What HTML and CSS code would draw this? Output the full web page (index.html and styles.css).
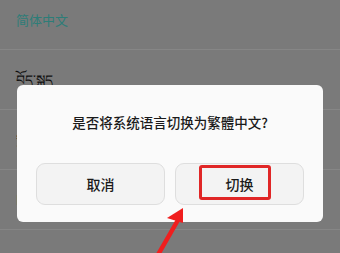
FILE: index.html
```html
<!doctype html>
<html lang="zh-CN">

<head>
    <meta charset="UTF-8">
    <title>语言设置</title>
    <link rel="stylesheet" href="styles.css">
</head>

<body>
    <div class="screen">
        <ul class="lang-list">
            <li class="lang-item current">简体中文</li>
            <li class="lang-item tibetan">བོད་སྐད</li>
            <li class="lang-item">繁體中文</li>
            <li class="lang-item">English</li>
        </ul>

        <!-- 弹窗 -->
        <div class="mask">
            <div class="dialog">
                <p class="dialog-title">是否将系统语言切换为繁體中文?</p>
                <div class="dialog-btns">
                    <div class="btn">取消</div>
                    <div class="btn">切换</div>
                </div>
            </div>
        </div>

        <!-- 标注 -->
        <div class="mark-box"></div>
        <svg class="mark-arrow" width="60" height="60" viewBox="0 0 60 60">
            <path d="M5 60 L28 20" stroke="#f01e1e" stroke-width="4.5" fill="none"/>
            <polygon points="33,8 17,18 33,23" fill="#f01e1e"/>
        </svg>
    </div>
</body>

</html>
```

FILE: styles.css
```css
* {
    margin: 0;
    padding: 0;
}
li {
    list-style: none;
}
body {
    font-family: "Noto Sans CJK SC", "DejaVu Sans", sans-serif;
    background-color: #7a7a7a;
}
.screen {
    position: relative;
    width: 340px;
    height: 253px;
    overflow: hidden;
}

/*背景列表（已被遮罩压暗）*/
.lang-list {
    margin-top: -10px;
}
.lang-item {
    height: 59px;
    line-height: 59px;
    padding-left: 16px;
    font-size: 13px;
    color: #111;
    border-bottom: 1px solid #868686;
}
.lang-item.current {
    color: #2d7d78;
}
.lang-item.tibetan {
    font-size: 14px;
}

/*弹窗*/
.mask {
    position: absolute;
    top: 0;
    left: 0;
    right: 0;
    bottom: 0;
    padding-top: 85px;
}
.dialog {
    margin: 0 17px;
    height: 137px;
    background-color: #fafafa;
    border-radius: 6px;
    display: flex;
    flex-direction: column;
    align-items: center;
}
.dialog-title {
    margin-top: 27px;
    font-size: 13.5px;
    font-weight: 500;
    color: #1a1a1a;
    line-height: 20px;
}
.dialog-btns {
    display: flex;
    gap: 10px;
    margin-top: 31px;
}
.btn {
    width: 127px;
    height: 40px;
    line-height: 40px;
    text-align: center;
    font-size: 14px;
    font-weight: 500;
    color: #1a1a1a;
    background-color: #f3f3f3;
    border: 1px solid #dedede;
    border-radius: 9px;
}

/*红色标注框*/
.mark-box {
    position: absolute;
    left: 199px;
    top: 165px;
    width: 66px;
    height: 29px;
    border: 3px solid #e02626;
    border-radius: 3px;
}
.mark-arrow {
    position: absolute;
    left: 150px;
    top: 200px;
}
```
